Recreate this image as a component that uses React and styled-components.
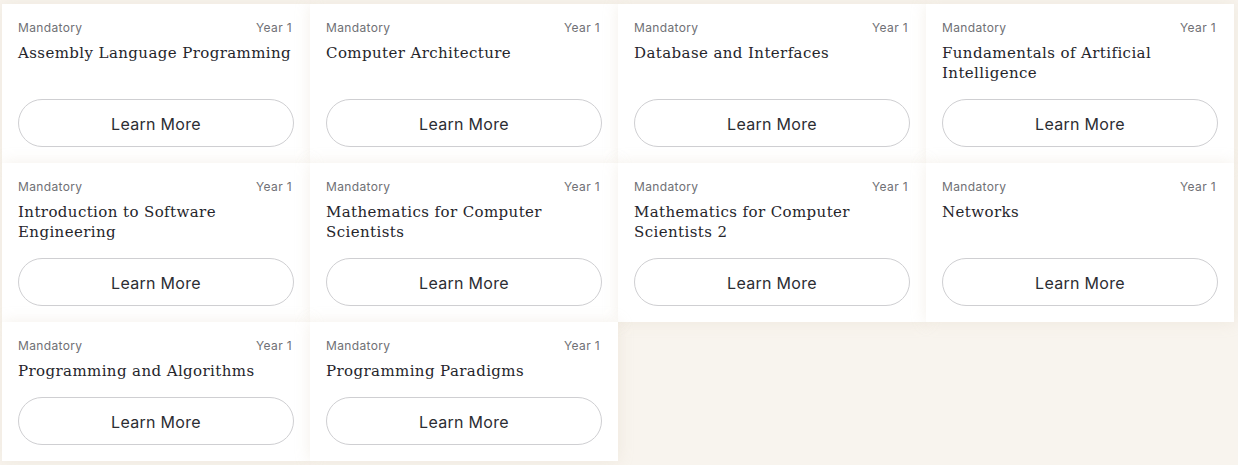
import styled, { createGlobalStyle } from "styled-components";

const GlobalStyle = createGlobalStyle`
  body {
    margin: 0;
    background: #f8f4ee;
    font-family: Inter, "Noto Sans", sans-serif;
  }
`;

const Grid = styled.div`
  display: grid;
  grid-template-columns: repeat(4, 308px);
  padding: 4px 4px 4px 2px;
`;

const Card = styled.div`
  display: flex;
  flex-direction: column;
  padding: 17px 16px 16px;
  background: #fff;
  box-shadow: 0 0 14px rgba(214, 200, 178, 0.28);
`;

const Meta = styled.div`
  display: flex;
  justify-content: space-between;
  padding-right: 2px;
  font-size: 12px;
  line-height: 14px;
  letter-spacing: 0.35px;
  color: #6f7075;
  margin-bottom: 8px;
`;

const Title = styled.h3`
  margin: 0;
  font-family: "DejaVu Serif", serif;
  font-weight: 400;
  font-size: 15px;
  line-height: 20px;
  letter-spacing: 0.4px;
  color: #25252b;
`;

const Button = styled.button`
  margin-top: auto;
  height: 48px;
  padding: 2px 0 0;
  border: 1px solid #cfcfd2;
  border-radius: 24px;
  background: #fff;
  font-family: Inter, "Noto Sans", sans-serif;
  font-size: 16px;
  letter-spacing: 0.3px;
  color: #2c2d33;
  cursor: pointer;
`;

const Spacer = styled.div`
  height: 16px;
  flex-shrink: 0;
`;

const courses = [
  "Assembly Language Programming",
  "Computer Architecture",
  "Database and Interfaces",
  "Fundamentals of Artificial Intelligence",
  "Introduction to Software Engineering",
  "Mathematics for Computer Scientists",
  "Mathematics for Computer Scientists 2",
  "Networks",
  "Programming and Algorithms",
  "Programming Paradigms",
];

const CourseCard = ({ title }) => (
  <Card>
    <Meta>
      <span>Mandatory</span>
      <span>Year 1</span>
    </Meta>
    <Title>{title}</Title>
    <Spacer />
    <Button>Learn More</Button>
  </Card>
);

export default function App() {
  return (
    <>
      <GlobalStyle />
      <Grid>
        {courses.map((c) => (
          <CourseCard key={c} title={c} />
        ))}
      </Grid>
    </>
  );
}
